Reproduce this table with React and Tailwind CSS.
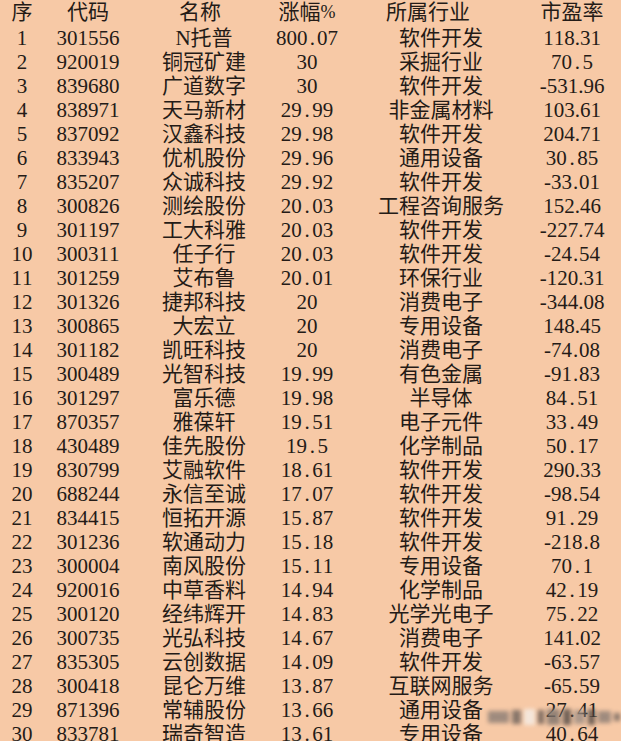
const rows = [
  ['1', '301556', 'N托普', '800.07', '软件开发', '118.31'],
  ['2', '920019', '铜冠矿建', '30', '采掘行业', '70.5'],
  ['3', '839680', '广道数字', '30', '软件开发', '-531.96'],
  ['4', '838971', '天马新材', '29.99', '非金属材料', '103.61'],
  ['5', '837092', '汉鑫科技', '29.98', '软件开发', '204.71'],
  ['6', '833943', '优机股份', '29.96', '通用设备', '30.85'],
  ['7', '835207', '众诚科技', '29.92', '软件开发', '-33.01'],
  ['8', '300826', '测绘股份', '20.03', '工程咨询服务', '152.46'],
  ['9', '301197', '工大科雅', '20.03', '软件开发', '-227.74'],
  ['10', '300311', '任子行', '20.03', '软件开发', '-24.54'],
  ['11', '301259', '艾布鲁', '20.01', '环保行业', '-120.31'],
  ['12', '301326', '捷邦科技', '20', '消费电子', '-344.08'],
  ['13', '300865', '大宏立', '20', '专用设备', '148.45'],
  ['14', '301182', '凯旺科技', '20', '消费电子', '-74.08'],
  ['15', '300489', '光智科技', '19.99', '有色金属', '-91.83'],
  ['16', '301297', '富乐德', '19.98', '半导体', '84.51'],
  ['17', '870357', '雅葆轩', '19.51', '电子元件', '33.49'],
  ['18', '430489', '佳先股份', '19.5', '化学制品', '50.17'],
  ['19', '830799', '艾融软件', '18.61', '软件开发', '290.33'],
  ['20', '688244', '永信至诚', '17.07', '软件开发', '-98.54'],
  ['21', '834415', '恒拓开源', '15.87', '软件开发', '91.29'],
  ['22', '301236', '软通动力', '15.18', '软件开发', '-218.8'],
  ['23', '300004', '南风股份', '15.11', '专用设备', '70.1'],
  ['24', '920016', '中草香料', '14.94', '化学制品', '42.19'],
  ['25', '300120', '经纬辉开', '14.83', '光学光电子', '75.22'],
  ['26', '300735', '光弘科技', '14.67', '消费电子', '141.02'],
  ['27', '835305', '云创数据', '14.09', '软件开发', '-63.57'],
  ['28', '300418', '昆仑万维', '13.87', '互联网服务', '-65.59'],
  ['29', '871396', '常辅股份', '13.66', '通用设备', '27.41'],
  ['30', '833781', '瑞奇智造', '13.61', '专用设备', '40.64'],
];

// digits, dots and minus signs get a fixed half-width cell, like the song-style font in the shot
function Txt({ s }) {
  return (
    <>
      {s.split('').map((ch, i) =>
        /[0-9.\-]/.test(ch) ? (
          <span key={i} className="inline-block w-[10.5px] text-center">{ch}</span>
        ) : (
          <span key={i}>{ch}</span>
        )
      )}
    </>
  );
}

const grid = 'grid grid-cols-[44px_88px_144px_62px_206px_56px]';
const cell = 'flex justify-center whitespace-nowrap';

export default function App() {
  return (
    <div className="relative w-[621px] h-[741px] overflow-hidden bg-[#f7c9a6] text-[#241b17] text-[21px] font-['Liberation_Serif','Noto_Sans_CJK_SC',serif]">
      {/* header */}
      <div className={`${grid} h-[26px] leading-[25px]`}>
        <div className={cell}>序</div>
        <div className={cell}>代码</div>
        <div className={`${cell} pr-[8px]`}>名称</div>
        <div className={cell}>涨幅<span className="text-[18px]">%</span></div>
        <div className={`${cell} pr-[26px]`}>所属行业</div>
        <div className={cell}>市盈率</div>
      </div>

      {rows.map((r) => (
        <div key={r[0]} className={`${grid} h-[24px] leading-[24px]`}>
          <div className={cell}><Txt s={r[0]} /></div>
          <div className={cell}><Txt s={r[1]} /></div>
          <div className={cell}>{r[2]}</div>
          <div className={cell}><Txt s={r[3]} /></div>
          <div className={cell}>{r[4]}</div>
          <div className={cell}><Txt s={r[5]} /></div>
        </div>
      ))}

      {/* blurred watermark */}
      <div className="absolute left-[488px] top-[707px] w-[132px] h-[20px] blur-[2px] flex items-center gap-[3px] opacity-80">
        <div className="w-[22px] h-[12px] bg-[#8a7c74]" />
        <div className="w-[10px] h-[14px] bg-[#6d625c]" />
        <div className="w-[12px] h-[16px] bg-[#f4eee8]" />
        <div className="w-[6px] h-[14px] bg-[#5e544f]" />
        <div className="w-[14px] h-[16px] bg-[#7d726b]" />
        <div className="w-[8px] h-[16px] bg-[#4f4743]" />
        <div className="w-[12px] h-[14px] bg-[#9b8d84]" />
        <div className="w-[8px] h-[16px] bg-[#4f4743]" />
        <div className="w-[14px] h-[12px] bg-[#8a7c74]" />
        <div className="w-[6px] h-[8px] bg-[#6d625c]" />
      </div>
    </div>
  );
}
